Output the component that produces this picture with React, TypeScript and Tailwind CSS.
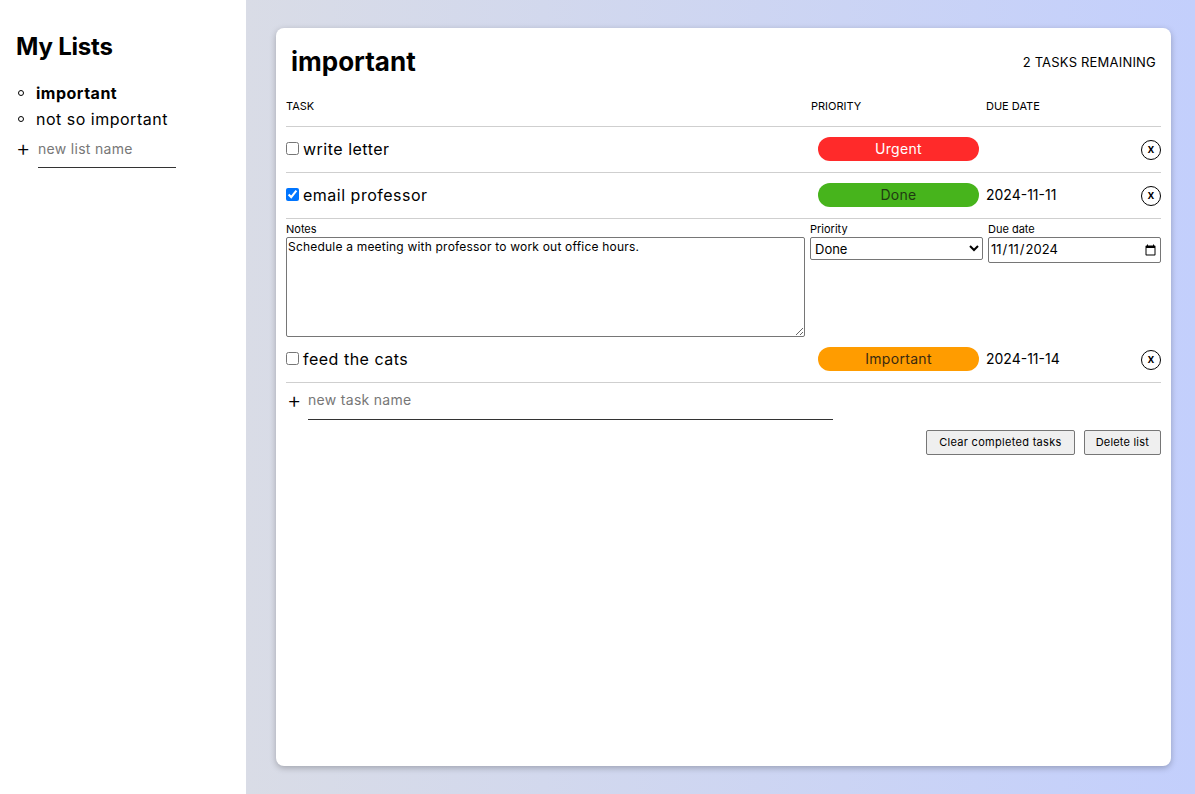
import React from 'react';

type Task = {
  name: string;
  done: boolean;
  priority: 'Urgent' | 'Done' | 'Important';
  due: string;
  open?: boolean;
  notes?: string;
  dueInput?: string;
};

const tasks: Task[] = [
  { name: 'write letter', done: false, priority: 'Urgent', due: '' },
  {
    name: 'email professor',
    done: true,
    priority: 'Done',
    due: '2024-11-11',
    open: true,
    notes: 'Schedule a meeting with professor to work out office hours.',
    dueInput: '2024-11-11',
  },
  { name: 'feed the cats', done: false, priority: 'Important', due: '2024-11-14' },
];

const badge: Record<Task['priority'], string> = {
  Urgent: 'bg-[#ff2a2a] text-white',
  Done: 'bg-[#47b41c] text-[#1f3a12]',
  Important: 'bg-[#ff9c00] text-[#3a2a10]',
};

function XButton() {
  return (
    <button className="w-[20px] h-[20px] rounded-full border border-black flex items-center justify-center text-[12px] font-semibold leading-none text-black pb-[1px]">
      x
    </button>
  );
}

function TaskRow({ t }: { t: Task }) {
  return (
    <>
      <div className="grid grid-cols-[525px_175px_1fr_auto] items-center h-[46px] border-b border-[#cfcfcf]">
        <label className="flex items-center gap-[4px] text-[16px] tracking-[0.5px] text-black pb-[2px]">
          <input type="checkbox" defaultChecked={t.done} className="w-[13px] h-[13px] m-0 accent-[#0075ff]" />
          {t.name}
        </label>
        <div className="px-[7px] pb-[2px]">
          <div className={`h-[24px] rounded-full flex items-center justify-center text-[14px] tracking-[0.3px] ${badge[t.priority]}`}>
            {t.priority}
          </div>
        </div>
        <div className="text-[14px] text-black pb-[2px]">{t.due}</div>
        <XButton />
      </div>
      {t.open && (
        <div className="grid grid-cols-[519px_173px_173px] gap-x-[5px] pt-[3px] h-[118px]">
          <div className="flex flex-col">
            <span className="text-[11px] leading-[15px] text-black">Notes</span>
            <textarea
              defaultValue={t.notes}
              className="h-[100px] border border-[#767676] rounded-[2px] px-[1px] py-0 text-[12px] tracking-[0.2px] leading-[17px] text-black resize-y"
            />
          </div>
          <div className="flex flex-col">
            <span className="text-[11px] leading-[15px] text-black">Priority</span>
            <select
              defaultValue={t.priority}
              className="h-[23px] border border-[#767676] rounded-[2px] px-0 text-[13px] text-black bg-white"
            >
              <option>Urgent</option>
              <option>Important</option>
              <option>Done</option>
            </select>
          </div>
          <div className="flex flex-col">
            <span className="text-[11px] leading-[15px] text-black">Due date</span>
            <input
              type="date"
              defaultValue={t.dueInput}
              className="h-[26px] border border-[#767676] rounded-[2px] px-[1px] text-[13px] text-black"
            />
          </div>
        </div>
      )}
    </>
  );
}

export default function App() {
  const font = { fontFamily: 'Inter, "Noto Sans", sans-serif' };
  return (
    <div className="flex w-[1195px] h-[794px] overflow-hidden" style={font}>
      <aside className="w-[246px] bg-white px-[16px] pt-[30px]">
        <h1 className="text-[24px] font-bold leading-[34px] text-black tracking-[-0.2px]">My Lists</h1>
        <ul className="mt-[16px]">
          {['important', 'not so important'].map((n, i) => (
            <li key={n} className="flex items-center h-[26px] text-[16px] tracking-[0.5px] text-black">
              <span className="w-[6px] h-[6px] rounded-full border border-black ml-[2px] mr-[12px]" />
              <span className={i === 0 ? 'font-bold' : ''}>{n}</span>
            </li>
          ))}
        </ul>
        <div className="flex items-start mt-[4px]">
          <span className="text-[22px] leading-[24px] w-[22px] text-black font-light">+</span>
          <input
            placeholder="new list name"
            className="w-[138px] border-b border-[#333] text-[14px] tracking-[0.3px] pb-[8px] pt-[2px] outline-none placeholder:text-[#777]"
          />
        </div>
      </aside>
      <main className="flex-1 bg-gradient-to-r from-[#d9dce6] to-[#c3cffc] pl-[30px] pr-[24px] py-[28px]">
        <div className="h-full bg-white rounded-[8px] shadow-[0_2px_6px_rgba(0,0,0,0.25)] p-[10px]">
          <div className="flex items-center justify-between h-[48px] px-[5px] pb-[2px]">
            <h2 className="text-[26px] font-bold text-black">important</h2>
            <span className="text-[13px] text-black tracking-[0.2px] pt-[4px]">2 TASKS REMAINING</span>
          </div>
          <div className="grid grid-cols-[525px_175px_1fr] h-[41px] pt-[13px] border-b border-[#cfcfcf] text-[11px] leading-[14px] text-black">
            <span>TASK</span>
            <span>PRIORITY</span>
            <span>DUE DATE</span>
          </div>
          {tasks.map((t) => (
            <TaskRow key={t.name} t={t} />
          ))}
          <div className="flex items-start pt-[6px]">
            <span className="text-[22px] leading-[22px] w-[22px] pl-[1px] text-black font-light">+</span>
            <input
              placeholder="new task name"
              className="w-[525px] border-b border-[#333] text-[14px] tracking-[0.3px] pb-[9px] outline-none placeholder:text-[#777]"
            />
          </div>
          <div className="flex justify-end gap-[9px] mt-[10px]">
            <button className="h-[25px] px-[12px] bg-[#efefef] border border-[#767676] rounded-[2px] text-[11px] tracking-[0.3px] text-black">
              Clear completed tasks
            </button>
            <button className="h-[25px] px-[11px] bg-[#efefef] border border-[#767676] rounded-[2px] text-[11px] tracking-[0.2px] text-black">
              Delete list
            </button>
          </div>
        </div>
      </main>
    </div>
  );
}
